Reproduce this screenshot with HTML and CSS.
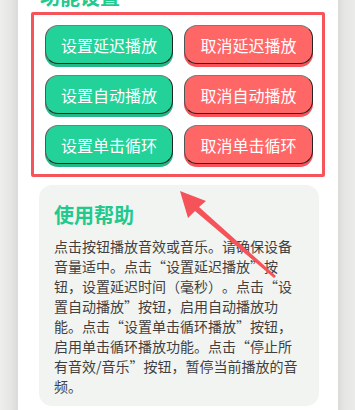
FILE: index.html
```html
<!DOCTYPE html>
<html lang="zh-CN">
<head>
<meta charset="utf-8">
<title>功能设置</title>
<link rel="stylesheet" href="styles.css">
</head>
<body>
<div class="page">
  <div class="strip strip-left"></div>
  <main class="card">
    <h2 class="section-title">功能设置</h2>
    <div class="button-grid">
      <button class="btn btn-green">设置延迟播放</button>
      <button class="btn btn-red">取消延迟播放</button>
      <button class="btn btn-green">设置自动播放</button>
      <button class="btn btn-red">取消自动播放</button>
      <button class="btn btn-green">设置单击循环</button>
      <button class="btn btn-red">取消单击循环</button>
    </div>
    <section class="help">
      <h3 class="help-title">使用帮助</h3>
      <p class="help-text">点击按钮播放音效或音乐。请确保设备音量适中。点击“设置延迟播放”按钮，设置延迟时间（毫秒）。点击“设置自动播放”按钮，启用自动播放功能。点击“设置单击循环播放”按钮，启用单击循环播放功能。点击“停止所有音效/音乐”按钮，暂停当前播放的音频。</p>
    </section>
  </main>
  <div class="strip strip-right"></div>
  <svg class="arrow" width="355" height="410" viewBox="0 0 355 410" aria-hidden="true">
    <polygon points="180,191 206,201 199,207 276,276 274,278 195,211 188,218" fill="#f6525a"/>
  </svg>
</div>
</body>
</html>
```
FILE: styles.css
```css
html, body {
  margin: 0;
  padding: 0;
}
body {
  background: #e8e9e7;
  font-family: "Noto Sans CJK SC", "Noto Sans", sans-serif;
  overflow: hidden;
}
.page {
  position: relative;
  display: flex;
  width: 355px;
  height: 410px;
  overflow: hidden;
}
.strip {
  flex: none;
}
.strip-left {
  width: 18px;
  background: linear-gradient(to right, #eeeeed 0%, #e6e7e5 60%, #d9dbd8 100%);
}
.strip-right {
  width: 17px;
  background: linear-gradient(to right, #d9dbd8 0%, #e6e7e5 40%, #ebebea 100%);
}
.card {
  width: 320px;
  flex: none;
  background: #ffffff;
  display: flex;
  flex-direction: column;
}
.section-title {
  margin: -15px 0 0 22px;
  font-size: 20px;
  line-height: 24px;
  font-weight: 700;
  color: #21c98d;
}
.button-grid {
  margin: 3px 13px 0 13px;
  border: 3px solid #f5545a;
  border-radius: 2px;
  padding: 10px 9px 10px 11px;
  display: grid;
  grid-template-columns: 128px 129px;
  column-gap: 11px;
  row-gap: 11px;
}
.btn {
  height: 39px;
  box-sizing: border-box;
  border: 1.5px solid #222;
  border-top-color: #7a7a7a;
  border-left-color: #555;
  border-radius: 13px;
  color: #ffffff;
  font-family: "Noto Sans CJK SC", sans-serif;
  font-size: 16px;
  line-height: 20px;
  padding: 0;
  text-align: center;
}
.btn-green {
  background: #22d298;
  box-shadow: 0 3px 0 #27b786;
}
.btn-red {
  background: #ff6767;
  box-shadow: 0 3px 0 #f7525a;
}
.help {
  margin: 8px 19px 0 21px;
  background: #f2f4f2;
  border-radius: 13px;
  padding: 16px 17px 10px 15px;
}
.help-title {
  margin: 0 0 7px 0;
  font-size: 20px;
  line-height: 28px;
  font-weight: 700;
  color: #21c98d;
}
.help-text {
  margin: 0;
  font-size: 14px;
  line-height: 20px;
  color: #3f3f3f;
  text-spacing-trim: space-all;
}
.arrow {
  position: absolute;
  left: 0;
  top: 0;
  pointer-events: none;
}
```
